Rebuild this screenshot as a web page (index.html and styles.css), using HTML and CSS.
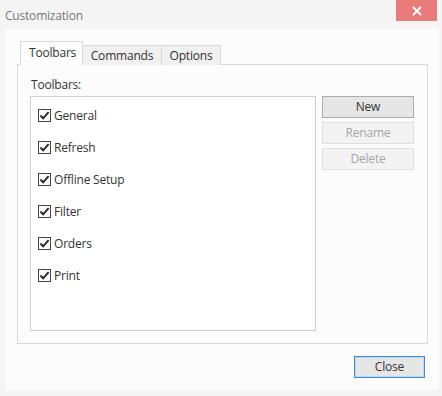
FILE: index.html
```html
<!DOCTYPE html>
<html>
<head>
<meta charset="utf-8">
<link rel="stylesheet" href="styles.css">
</head>
<body>
<div class="window">
  <div class="titlebar">
    <span class="title">Customization</span>
    <span class="close-x">
      <svg width="10" height="10" viewBox="0 0 10 10"><path d="M1 1 L9 9 M9 1 L1 9" stroke="#fff" stroke-width="1.8"/></svg>
    </span>
  </div>
  <div class="dialog">
    <div class="tabs">
      <div class="tab active">Toolbars</div>
      <div class="tab">Commands</div>
      <div class="tab">Options</div>
    </div>
    <div class="panel">
      <div class="label">Toolbars:</div>
      <div class="content">
        <div class="list">
          <div class="item"><span class="cb"><svg width="11" height="11" viewBox="0 0 11 11"><path d="M1.5 5.5 L4.2 8.3 L9.6 2.2" fill="none" stroke="#222" stroke-width="1.9"/></svg></span>General</div>
          <div class="item"><span class="cb"><svg width="11" height="11" viewBox="0 0 11 11"><path d="M1.5 5.5 L4.2 8.3 L9.6 2.2" fill="none" stroke="#222" stroke-width="1.9"/></svg></span>Refresh</div>
          <div class="item"><span class="cb"><svg width="11" height="11" viewBox="0 0 11 11"><path d="M1.5 5.5 L4.2 8.3 L9.6 2.2" fill="none" stroke="#222" stroke-width="1.9"/></svg></span>Offline Setup</div>
          <div class="item"><span class="cb"><svg width="11" height="11" viewBox="0 0 11 11"><path d="M1.5 5.5 L4.2 8.3 L9.6 2.2" fill="none" stroke="#222" stroke-width="1.9"/></svg></span>Filter</div>
          <div class="item"><span class="cb"><svg width="11" height="11" viewBox="0 0 11 11"><path d="M1.5 5.5 L4.2 8.3 L9.6 2.2" fill="none" stroke="#222" stroke-width="1.9"/></svg></span>Orders</div>
          <div class="item"><span class="cb"><svg width="11" height="11" viewBox="0 0 11 11"><path d="M1.5 5.5 L4.2 8.3 L9.6 2.2" fill="none" stroke="#222" stroke-width="1.9"/></svg></span>Print</div>
        </div>
        <div class="buttons">
          <div class="btn">New</div>
          <div class="btn disabled">Rename</div>
          <div class="btn disabled">Delete</div>
        </div>
      </div>
    </div>
    <div class="footer">
      <div class="btn close-btn">Close</div>
    </div>
  </div>
</div>
</body>
</html>
```

FILE: styles.css
```css
html, body {
  margin: 0;
  padding: 0;
}
body {
  width: 442px;
  height: 396px;
  background: #f4f4f4;
  font-family: "Open Sans", "Noto Sans", sans-serif;
  font-size: 12px;
  color: #333;
  overflow: hidden;
}
.window {
  width: 442px;
  height: 396px;
  display: flex;
  flex-direction: column;
}
.titlebar {
  height: 29px;
  display: flex;
  justify-content: space-between;
  align-items: flex-start;
  padding: 0 5px 0 5px;
  box-sizing: border-box;
}
.title {
  margin-top: 7px;
  color: #777;
  font-size: 12px;
  letter-spacing: -0.2px;
}
.close-x {
  width: 41px;
  height: 21px;
  background: #ea7b7b;
  display: flex;
  align-items: center;
  justify-content: center;
}
.dialog {
  margin: 0 3px 0 5px;
  height: 361px;
  background: #fcfcfc;
  padding: 13px 0 0 12px;
  box-sizing: border-box;
  display: flex;
  flex-direction: column;
}
.tabs {
  display: flex;
  align-items: flex-end;
  padding-left: 3px;
  height: 23px;
  position: relative;
  z-index: 1;
  margin-bottom: -1px;
}
.tab {
  height: 20px;
  box-sizing: border-box;
  border: 1px solid #d9d9d9;
  border-bottom: none;
  background: #f0f0f0;
  padding: 0 8px;
  line-height: 19px;
  color: #333;
  margin-left: -1px;
  letter-spacing: -0.2px;
}
.tab:first-child {
  margin-left: 0;
}
.tab.active {
  height: 24px;
  background: #fcfcfc;
  line-height: 22px;
  padding: 0 8px;
  width: 63px;
}
.tab:nth-child(2) {
  width: 80px;
  text-align: center;
  padding: 0;
}
.tab:nth-child(3) {
  width: 60px;
  text-align: center;
  padding: 0;
}
.panel {
  width: 411px;
  height: 280px;
  box-sizing: border-box;
  border: 1px solid #d9d9d9;
  padding: 11px 12px 12px 12px;
  display: flex;
  flex-direction: column;
}
.label {
  color: #333;
  height: 20px;
  line-height: 17px;
  padding-left: 1px;
  letter-spacing: -0.2px;
}
.content {
  display: flex;
  gap: 6px;
  flex: 1;
}
.list {
  width: 286px;
  box-sizing: border-box;
  border: 1px solid #cfcfcf;
  background: #fff;
  padding-top: 2px;
}
.item {
  height: 32px;
  display: flex;
  align-items: center;
  padding-left: 7px;
  color: #333;
  letter-spacing: -0.2px;
}
.cb {
  width: 13px;
  height: 13px;
  box-sizing: border-box;
  border: 1px solid #444;
  background: #fff;
  margin-right: 3px;
  display: flex;
  align-items: center;
  justify-content: center;
}
.buttons {
  display: flex;
  flex-direction: column;
  gap: 4px;
  width: 92px;
}
.btn {
  height: 22px;
  box-sizing: border-box;
  border: 1px solid #adadad;
  background: #e6e6e6;
  text-align: center;
  line-height: 19px;
  color: #333;
  letter-spacing: -0.2px;
}
.btn.disabled {
  border-color: #dedede;
  background: #f3f3f3;
  color: #a6a6a6;
}
.footer {
  display: flex;
  justify-content: flex-end;
  padding: 12px 14px 0 0;
}
.close-btn {
  width: 71px;
  height: 22px;
  border: 1px solid #3d8bd0;
  box-shadow: inset 0 0 0 1px #bcd9f2;
  background: #e6e6e6;
}
```
